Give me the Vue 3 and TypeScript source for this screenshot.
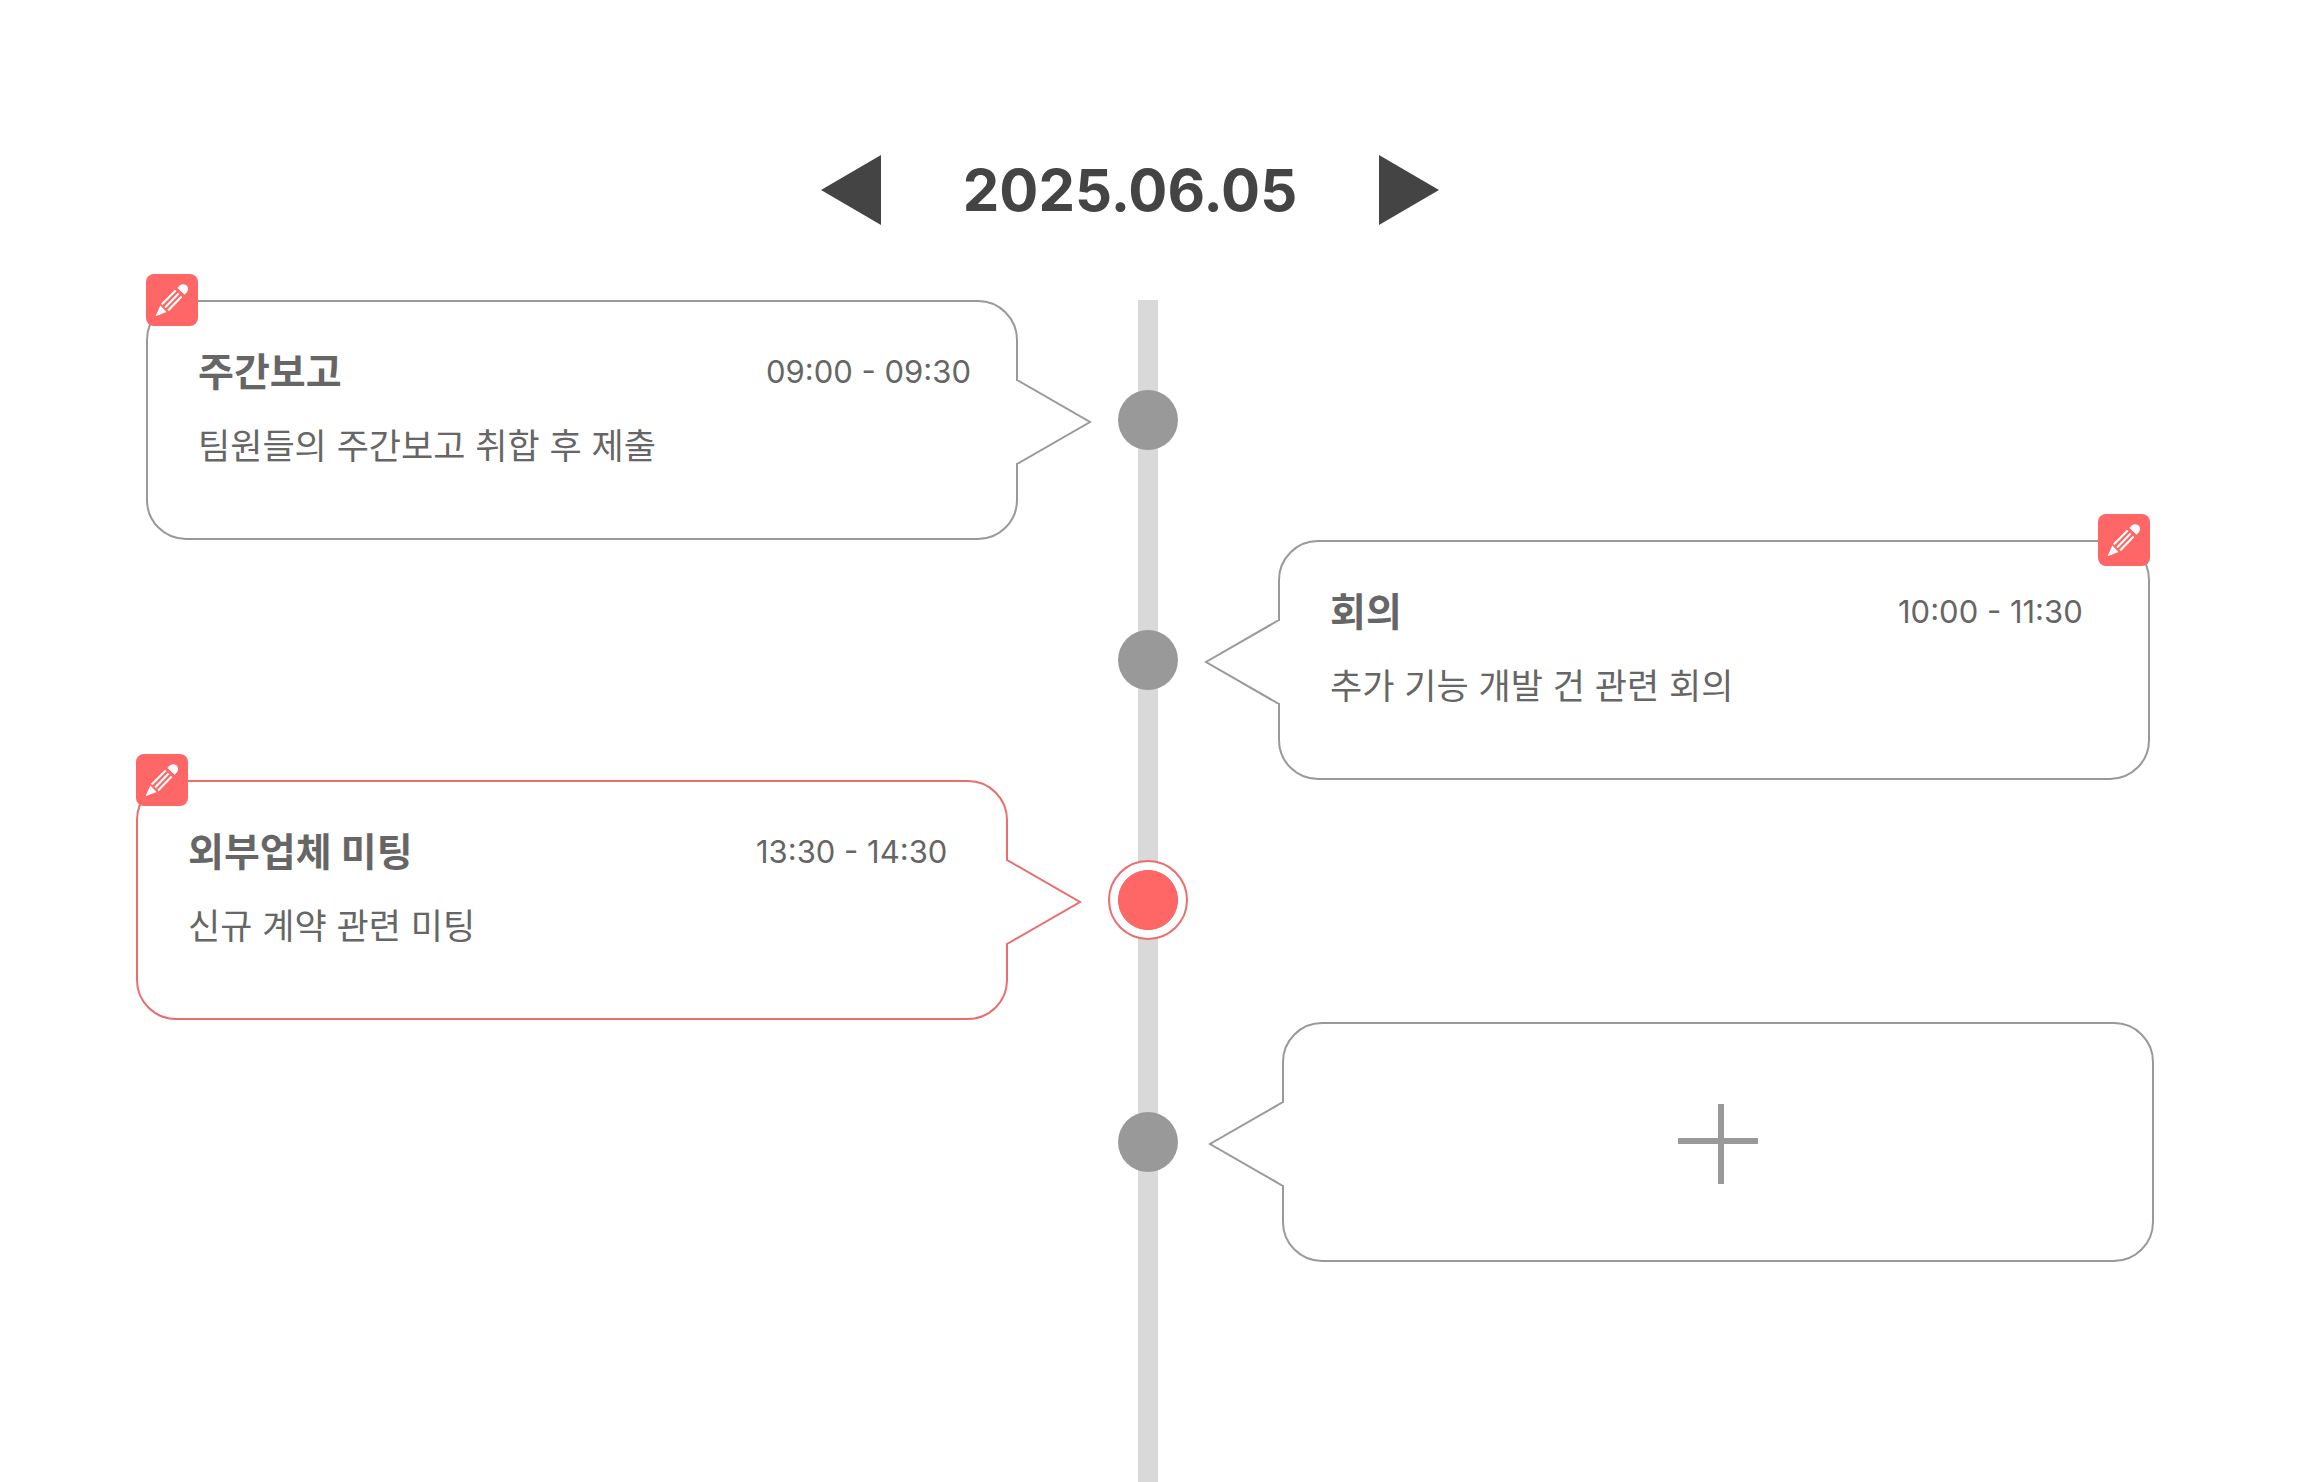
<script setup lang="ts">
import { computed, ref } from 'vue'

interface Schedule {
  id: number
  title: string
  time: string
  description: string
  active?: boolean
}

const schedules = ref<Schedule[]>([
  { id: 1, title: '주간보고', time: '09:00 - 09:30', description: '팀원들의 주간보고 취합 후 제출' },
  { id: 2, title: '회의', time: '10:00 - 11:30', description: '추가 기능 개발 건 관련 회의' },
  { id: 3, title: '외부업체 미팅', time: '13:30 - 14:30', description: '신규 계약 관련 미팅', active: true },
])

const current = ref(new Date(2025, 5, 5))

const dateLabel = computed(() => {
  const d = current.value
  const pad = (n: number) => String(n).padStart(2, '0')
  return `${d.getFullYear()}.${pad(d.getMonth() + 1)}.${pad(d.getDate())}`
})

function moveDay(step: number) {
  const next = new Date(current.value)
  next.setDate(next.getDate() + step)
  current.value = next
}

const sideOf = (index: number) => (index % 2 === 0 ? 'left' : 'right')
</script>

<template>
  <main class="page">
    <header class="date-nav">
      <button class="arrow" type="button" aria-label="이전 날짜" @click="moveDay(-1)">
        <svg width="60" height="70" viewBox="0 0 60 70"><path d="M0 35L60 0V70Z" fill="#444" /></svg>
      </button>
      <h1 class="date">{{ dateLabel }}</h1>
      <button class="arrow" type="button" aria-label="다음 날짜" @click="moveDay(1)">
        <svg width="60" height="70" viewBox="0 0 60 70"><path d="M60 35L0 0V70Z" fill="#444" /></svg>
      </button>
    </header>

    <ol class="timeline">
      <li
        v-for="(item, index) in schedules"
        :key="item.id"
        class="row"
        :class="[sideOf(index), { active: item.active }]"
      >
        <article class="card">
          <svg class="tail" width="76" height="84" viewBox="0 0 76 84">
            <rect x="0" y="1" width="3" height="82" fill="#fff" />
            <path d="M1 0L74 42L1 84" fill="#fff" stroke="currentColor" stroke-width="2" />
          </svg>
          <button class="edit" type="button" :aria-label="`${item.title} 수정`">
            <svg width="52" height="52" viewBox="0 0 52 52">
              <path d="M9.6 42.3L14.3 31.6L20.6 38Z" fill="#fff" />
              <path d="M15.7 30.6L29.7 16.6M19.1 33.4L32.6 19.5M22.1 36.4L35.6 22.6" stroke="#fff" stroke-width="2.1" />
              <path d="M31.4 14Q33.6 10.2 37.4 10.2Q42.2 10.4 42 15.4Q41.8 18.6 38.6 20.8Z" fill="#fff" />
            </svg>
          </button>
          <div class="card-head">
            <h2 class="title">{{ item.title }}</h2>
            <time class="time">{{ item.time }}</time>
          </div>
          <p class="description">{{ item.description }}</p>
        </article>
        <span class="dot"></span>
      </li>

      <li class="row add" :class="sideOf(schedules.length)">
        <button class="card add-card" type="button" aria-label="일정 추가">
          <svg class="tail" width="76" height="84" viewBox="0 0 76 84">
            <rect x="0" y="1" width="3" height="82" fill="#fff" />
            <path d="M1 0L74 42L1 84" fill="#fff" stroke="currentColor" stroke-width="2" />
          </svg>
          <svg width="80" height="80" viewBox="0 0 80 80">
            <path d="M0 37H80M43 0V80" stroke="#999" stroke-width="6" />
          </svg>
        </button>
        <span class="dot"></span>
      </li>
    </ol>
  </main>
</template>

<style>
body {
  margin: 0;
  background: #fff;
}
</style>

<style scoped>
.page {
  box-sizing: border-box;
  display: flex;
  flex-direction: column;
  min-height: 100vh;
  padding-top: 155px;
  color: #666;
  font-family: Inter, "Noto Sans CJK KR", sans-serif;
}

button {
  padding: 0;
  border: 0;
  background: none;
  cursor: pointer;
}

svg {
  display: block;
}

.date-nav {
  display: flex;
  align-items: center;
  justify-content: center;
  margin-bottom: 75px;
  padding-right: 45px;
}

.date {
  width: 498px;
  margin: 0;
  color: #444;
  font-size: 58px;
  font-weight: 700;
  line-height: 70px;
  text-align: center;
}

.timeline {
  flex: 1;
  margin: 0;
  padding: 0 9px 0 0;
  list-style: none;
  background: linear-gradient(#d9d9d9, #d9d9d9) center top / 20px 100% no-repeat content-box;
}

.row {
  --shift: 0px;
  display: grid;
  grid-template-columns: 1fr 80px 1fr;
  align-items: center;
}

.row.active {
  --shift: 10px;
}

.row.add {
  --shift: 4px;
  margin-top: 2px;
}

.card {
  box-sizing: border-box;
  position: relative;
  min-height: 240px;
  padding: 40px 50px 36px;
  border: 2px solid #999;
  border-radius: 40px;
  background: #fff;
}

.left .card {
  grid-area: 1 / 1;
  margin: 0 calc(90px + var(--shift)) 0 calc(146px - var(--shift));
}

.right .card {
  grid-area: 1 / 3;
  margin: 0 calc(146px - var(--shift)) 0 calc(90px + var(--shift));
}

.active .card {
  border-color: #ed6c6c;
}

.tail {
  position: absolute;
  top: 78px;
  right: -76px;
  color: #999;
}

.right .tail {
  right: auto;
  left: -76px;
  transform: scaleX(-1);
}

.active .tail {
  color: #ed6c6c;
}

.edit {
  position: absolute;
  top: -28px;
  left: -2px;
  border-radius: 8px;
  background: #f66;
}

.right .edit {
  right: -2px;
  left: auto;
}

.card-head {
  display: grid;
  grid-template-columns: 1fr 200px;
  align-items: center;
}

.title {
  margin: 0;
  font-size: 39px;
  font-weight: 700;
  line-height: 60px;
}

.time {
  font-size: 31px;
  line-height: 60px;
  white-space: nowrap;
}

.description {
  margin: 16px 0 0;
  font-size: 35px;
  line-height: 56px;
}

.dot {
  box-sizing: border-box;
  grid-area: 1 / 2;
  justify-self: center;
  width: 60px;
  height: 60px;
  border-radius: 50%;
  background: #999;
}

.active .dot {
  width: 80px;
  height: 80px;
  border: 2px solid #ed6c6c;
  background: radial-gradient(closest-side, #f66 78%, #fff 80%);
}

.add-card {
  display: grid;
  place-items: center;
}
</style>
